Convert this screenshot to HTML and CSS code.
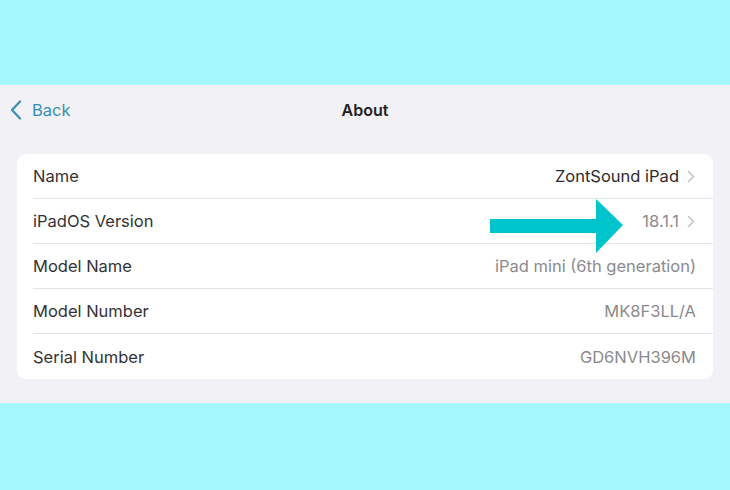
FILE: index.html
```html
<!DOCTYPE html>
<html lang="en">
<head>
  <meta charset="UTF-8">
  <meta name="viewport" content="width=device-width, initial-scale=1.0">
  <title>About</title>
  <link rel="stylesheet" href="styles.css">
</head>
<body>
  <div class="band"></div>
  <section class="panel">
    <header class="nav">
      <a class="back" href="#">
        <svg class="back-chevron" width="12" height="20" viewBox="0 0 12 20">
          <path d="M10 1.5 L2 10 L10 18.5" fill="none" stroke="#3a8fb0" stroke-width="2.2" stroke-linecap="round" stroke-linejoin="round"/>
        </svg>
        <span>Back</span>
      </a>
      <h1>About</h1>
    </header>

    <div class="card">
      <div class="row">
        <span class="label">Name</span>
        <span class="value dark">ZontSound iPad</span>
        <svg class="chevron" width="8" height="13" viewBox="0 0 8 13"><path d="M1.5 1.5 L6.5 6.5 L1.5 11.5" fill="none" stroke="#c4c4c8" stroke-width="1.6" stroke-linecap="round" stroke-linejoin="round"/></svg>
      </div>
      <div class="row">
        <span class="label">iPadOS Version</span>
        <span class="value">18.1.1</span>
        <svg class="chevron" width="8" height="13" viewBox="0 0 8 13"><path d="M1.5 1.5 L6.5 6.5 L1.5 11.5" fill="none" stroke="#c4c4c8" stroke-width="1.6" stroke-linecap="round" stroke-linejoin="round"/></svg>
        <svg class="arrow" width="134" height="54" viewBox="0 0 134 54">
          <polygon points="0,20 106,20 106,0 133,26 106,54 106,34 0,34" fill="#00c4cc"/>
        </svg>
      </div>
      <div class="row">
        <span class="label">Model Name</span>
        <span class="value">iPad mini (6th generation)</span>
      </div>
      <div class="row">
        <span class="label">Model Number</span>
        <span class="value">MK8F3LL/A</span>
      </div>
      <div class="row">
        <span class="label">Serial Number</span>
        <span class="value">GD6NVH396M</span>
      </div>
    </div>
  </section>
  <div class="band"></div>
</body>
</html>
```

FILE: styles.css
```css
body {
  margin: 0;
  font-family: 'Inter', 'Liberation Sans', sans-serif;
  background-color: #a5f8fc;
  color: #2c2c2e;
}

.band {
  height: 85px;
}

.panel {
  background-color: #f1f1f6;
  height: 318px;
  padding: 0 17px;
  box-sizing: border-box;
}

.nav {
  position: relative;
  height: 50px;
  display: flex;
  align-items: center;
  justify-content: center;
}

.nav h1 {
  margin: 0;
  font-size: 16px;
  font-weight: 600;
  color: #222;
}

.back {
  position: absolute;
  left: -7px;
  top: 0;
  height: 50px;
  display: flex;
  align-items: center;
  gap: 10px;
  color: #3a8fb0;
  text-decoration: none;
  font-size: 16.5px;
}

.card {
  margin-top: 19px;
  background: #fff;
  border-radius: 9px;
  padding-left: 16px;
}

.row {
  position: relative;
  height: 45px;
  box-sizing: border-box;
  display: flex;
  align-items: center;
  padding-right: 17px;
  border-bottom: 1px solid #e3e3e8;
  font-size: 16.5px;
}

.row:last-child {
  border-bottom: none;
}

.label {
  flex: 1;
  color: #333336;
}

.value {
  color: #8a8a8e;
}

.value.dark {
  color: #2c2c2e;
}

.chevron {
  margin-left: 8px;
  margin-right: 1px;
}

.arrow {
  position: absolute;
  left: 457px;
  top: 0;
}
```
